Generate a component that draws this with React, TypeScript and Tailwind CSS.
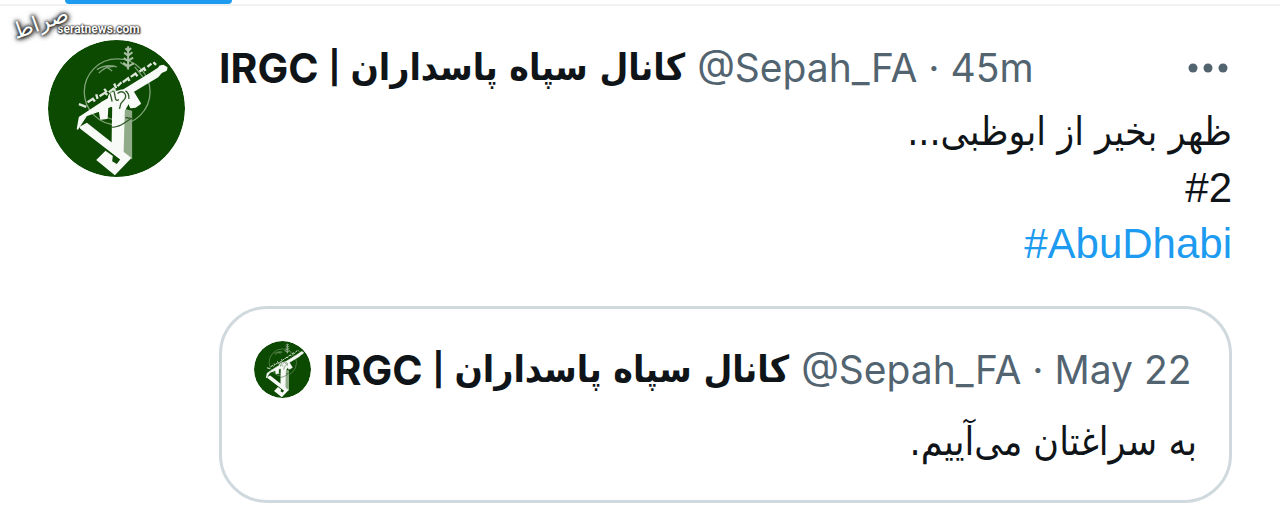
import clsx from "clsx";

const Avatar = ({ className }: { className: string }) => {
  return (
    <svg
      viewBox="23 29 412 412"
      className={clsx("shrink-0 rounded-full", className)}
      role="img"
      aria-label="Sepah_FA avatar"
    >
      <circle cx="229" cy="235" r="206" fill="#0c4a02" />
      {/* globe */}
      <g fill="none" stroke="#7fa377" strokeWidth="4">
        <circle cx="231" cy="185" r="99" />
        <path d="M170 118q28-18 60-8M176 128q20-20 46-20M196 108l20 14M240 96l24 16M284 110l24 30M200 262q30 14 60 4" />
      </g>
      {/* branch */}
      <path
        d="M264 48v70M264 62l-8-8M264 62l9-9M264 76l-12-9M264 76l13-10M264 92l-13-9M264 92l15-10M264 108l-15-10M264 108l17-9"
        fill="none"
        stroke="#a9bfa3"
        strokeWidth="6"
      />
      {/* motto band */}
      <path
        d="M116 222l22 8M142 216l16-10 6 8M172 206l-4-14M178 198l16-10 8 6M192 176l8 10M206 186l14-10 6 6M222 160l6 14M232 168l12-12M248 156l16-12 4 8M272 140l14-10 6 8M298 124l14-10 4 8M322 110l12-10M340 96l8 8"
        fill="none"
        stroke="#dfe8dc"
        strokeWidth="7"
      />
      {/* pillar shadow */}
      <path d="M252 236l24 6v146l-30-22z" fill="#8fab88" />
      {/* rifle */}
      <path
        d="M118 262l66-44 50-28 94-58 28-18 4-6 10-2 10 6-2 8-14 6-12 14-74 44 22 36-14 10-14 2-16-38-22 12-18 20-14 6-2 32-18 2-4-24-40 14-26 40z"
        fill="#f7faf6"
        stroke="#f7faf6"
        strokeWidth="5"
        strokeLinejoin="round"
      />
      {/* fist and arm */}
      <path
        d="M204 198q4-12 18-14l22-6q18 0 22 14l2 26-14 24-4 138-36-26 2-122-14-14z"
        fill="#f7faf6"
      />
      <path
        d="M210 190l6 24M222 184l4 22q4 8 10 2M232 190q10-10 20-2 8 8 2 18l-12 14-4 16M256 182q12 8 10 24"
        fill="none"
        stroke="#315c29"
        strokeWidth="4"
      />
      <path d="M216 292q24-4 34-12l22-14M256 262l24 4" fill="none" stroke="#315c29" strokeWidth="4" />
      {/* folded foot */}
      <path
        d="M118 290l22-12 134 106-50 52-56-46 28-28 22 16-2 16 14 8 10-14-120-92z"
        fill="#f7faf6"
      />
    </svg>
  );
};

const Author = ({ time }: { time: string }) => {
  return (
    <div className="flex items-center whitespace-nowrap leading-[56px]">
      <a href="#profile" className="flex items-center gap-[10px]">
        <span dir="ltr" className="text-[41px] font-bold">
          IRGC
        </span>
        <span className="text-[32px] font-bold">|</span>
        <span
          dir="rtl"
          lang="fa"
          className="font-['DejaVu_Sans_Condensed','DejaVu_Sans',sans-serif] text-[37px] font-bold"
        >
          کانال سپاه پاسداران
        </span>
      </a>
      <span className="ml-3 text-[39px] text-[#536471]">
        @Sepah_FA · {time}
      </span>
    </div>
  );
};

export default function App() {
  return (
    <main className="relative bg-white font-['Inter',sans-serif] text-[#0f1419]">
      <div className="h-[6px] border-b-2 border-[#eff1f2]">
        <div className="ml-[65px] h-1 w-[167px] rounded-b-md bg-[#1d9bf0]" />
      </div>

      <div className="absolute top-2 left-3 flex items-center text-white">
        <span
          lang="fa"
          className="-rotate-[20deg] font-['DejaVu_Sans',sans-serif] text-[22px] leading-[30px] [text-shadow:0_0_3px_#222,0_0_4px_#222,0_0_6px_#333,1px_1px_5px_#333]"
        >
          صراط
        </span>
        <span className="mt-3 -ml-3 font-['Roboto',sans-serif] text-[12px] leading-4 font-bold [text-shadow:0_0_2px_#111,0_0_2px_#111,1px_1px_2px_#111]">
          seratnews.com
        </span>
      </div>

      <article className="flex gap-[34px] pt-[34px] pr-12 pb-2 pl-12">
        <Avatar className="size-[137px]" />
        <div className="min-w-0 flex-1">
          <header className="flex items-center justify-between">
            <Author time="45m" />
            <button type="button" aria-label="More" className="pr-1">
              <svg viewBox="0 0 40 10" className="h-[10px] w-10" fill="#536471">
                <circle cx="5" cy="5" r="4.5" />
                <circle cx="20" cy="5" r="4.5" />
                <circle cx="35" cy="5" r="4.5" />
              </svg>
            </button>
          </header>

          <div
            dir="rtl"
            lang="fa"
            className="mt-2 font-['Liberation_Sans','DejaVu_Sans',sans-serif] text-[42px] leading-[56px]"
          >
            <p className="font-['DejaVu_Sans_Condensed','DejaVu_Sans',sans-serif] text-[39px]">
              ظهر بخیر از ابوظبی...
            </p>
            <p dir="ltr" className="text-right">
              #2
            </p>
            <p dir="ltr" className="text-right">
              <a href="#AbuDhabi" className="text-[#1d9bf0]">
                #AbuDhabi
              </a>
            </p>
          </div>

          <section className="mt-[34px] rounded-[48px] border-[3px] border-[#cfd9de] px-8 pt-8 pb-[30px]">
            <div className="flex items-center gap-3">
              <Avatar className="size-[57px]" />
              <Author time="May 22" />
            </div>
            <p
              dir="rtl"
              lang="fa"
              className="mt-4 font-['DejaVu_Sans_Condensed','DejaVu_Sans',sans-serif] text-[39px] leading-[56px]"
            >
              به سراغتان می‌آییم.
            </p>
          </section>
        </div>
      </article>
    </main>
  );
}
